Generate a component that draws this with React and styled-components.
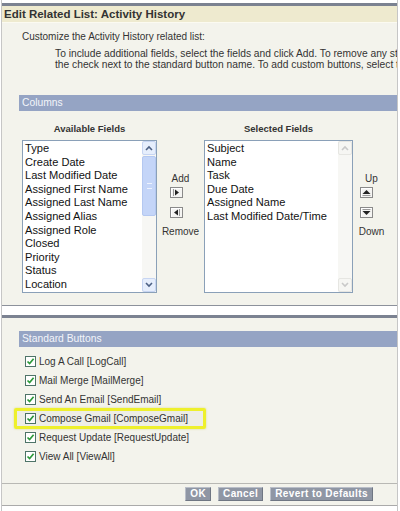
import React from 'react';
import styled, { createGlobalStyle } from 'styled-components';

const availableFields = [
  'Type',
  'Create Date',
  'Last Modified Date',
  'Assigned First Name',
  'Assigned Last Name',
  'Assigned Alias',
  'Assigned Role',
  'Closed',
  'Priority',
  'Status',
  'Location',
];

const selectedFields = [
  'Subject',
  'Name',
  'Task',
  'Due Date',
  'Assigned Name',
  'Last Modified Date/Time',
];

const standardButtons = [
  { label: 'Log A Call [LogCall]' },
  { label: 'Mail Merge [MailMerge]' },
  { label: 'Send An Email [SendEmail]' },
  { label: 'Compose Gmail [ComposeGmail]', highlight: true },
  { label: 'Request Update [RequestUpdate]' },
  { label: 'View All [ViewAll]' },
];

const GlobalStyle = createGlobalStyle`
  html, body {
    margin: 0;
    padding: 0;
    background: #fff;
  }
  body {
    font-family: "Liberation Sans", Arial, sans-serif;
    font-size: 10px;
    color: #222;
  }
`;

const Chevron = ({ dir, color }) => (
  <svg width="8" height="6" viewBox="0 0 8 6">
    <path
      d={dir === 'up' ? 'M1 5 L4 2 L7 5' : 'M1 1 L4 4 L7 1'}
      fill="none"
      stroke={color}
      strokeWidth="1.6"
    />
  </svg>
);

const Arrow = ({ dir }) => {
  const shapes = {
    right: { tri: 'M4 1.5 L8 4.5 L4 7.5 Z', bar: 'M2.5 1 L2.5 8' },
    left: { tri: 'M7 1.5 L3 4.5 L7 7.5 Z', bar: 'M8.5 1 L8.5 8' },
    up: { tri: 'M1.5 6 L5.5 2 L9.5 6 Z', bar: 'M1.5 7.5 L9.5 7.5' },
    down: { tri: 'M1.5 3 L5.5 7 L9.5 3 Z', bar: 'M1.5 1.5 L9.5 1.5' },
  };
  const s = shapes[dir];
  return (
    <svg width="11" height="9" viewBox="0 0 11 9">
      <path d={s.bar} stroke="#9a9a9a" strokeWidth="1" />
      <path d={s.tri} fill="#222" />
    </svg>
  );
};

const Check = () => (
  <svg width="9" height="9" viewBox="0 0 9 9">
    <path d="M1.5 4.5 L3.6 6.6 L7.6 1.8" fill="none" stroke="#2c9a3a" strokeWidth="1.7" />
  </svg>
);

const ScrollBar = ({ disabled }) => (
  <StScroll>
    <StScrollBtn disabled={disabled}>
      <Chevron dir="up" color={disabled ? '#c9c9c9' : '#4d6185'} />
    </StScrollBtn>
    <StTrack>
      {!disabled && (
        <StThumb>
          <span />
        </StThumb>
      )}
    </StTrack>
    <StScrollBtn disabled={disabled}>
      <Chevron dir="down" color={disabled ? '#c9c9c9' : '#4d6185'} />
    </StScrollBtn>
  </StScroll>
);

const FieldList = ({ title, items, width, disabledScroll }) => (
  <StFieldCol width={width}>
    <StColTitle>{title}</StColTitle>
    <StListBox>
      <StItems>
        {items.map(item => (
          <StItem key={item}>{item}</StItem>
        ))}
      </StItems>
      <ScrollBar disabled={disabledScroll} />
    </StListBox>
  </StFieldCol>
);

const Mover = ({ top, bottom, first, second, width, shift }) => (
  <StMover width={width}>
    <StMoverLabel>{top}</StMoverLabel>
    <StArrowBtn shift={shift}>
      <Arrow dir={first} />
    </StArrowBtn>
    <StArrowBtn shift={shift} second>
      <Arrow dir={second} />
    </StArrowBtn>
    <StMoverLabel spaced>{bottom}</StMoverLabel>
  </StMover>
);

const App = () => {
  return (
    <>
      <GlobalStyle />
      <StFrame>
        <StPanel>
          <StHeader>Edit Related List: Activity History</StHeader>
          <StIntro>Customize the Activity History related list:</StIntro>
          <StNote>
            <div>To include additional fields, select the fields and click Add. To remove any standard buttons, uncheck</div>
            <div>the check next to the standard button name. To add custom buttons, select them and click Add.</div>
          </StNote>
          <StSectionBar top={25.5}>Columns</StSectionBar>
          <StColumns>
            <FieldList title="Available Fields" items={availableFields} width={135} />
            <Mover top="Add" bottom="Remove" first="right" second="left" width={47} shift={8} />
            <FieldList title="Selected Fields" items={selectedFields} width={149} disabledScroll />
            <Mover top="Up" bottom="Down" first="up" second="down" width={37} shift={11} />
          </StColumns>
        </StPanel>

        <StPanel second>
          <StSectionBar top={13}>Standard Buttons</StSectionBar>
          <StRows>
            {standardButtons.map(btn => (
              <StRow key={btn.label} highlight={btn.highlight}>
                <StCheckbox>
                  <Check />
                </StCheckbox>
                <StRowLabel>{btn.label}</StRowLabel>
              </StRow>
            ))}
          </StRows>
          <StFooter>
            <StButton>OK</StButton>
            <StButton>Cancel</StButton>
            <StButton>Revert to Defaults</StButton>
          </StFooter>
        </StPanel>
      </StFrame>
    </>
  );
};

const StFrame = styled.div`
  width: 397px;
  height: 511px;
  box-sizing: border-box;
  margin-left: 1px;
  padding-top: 3px;
  border-left: 1px solid #c6c6c6;
  border-right: 1px solid #c6c6c6;
  overflow: hidden;
`;

const StPanel = styled.div`
  background: #f3f3ec;
  border-top: 3px solid #7b8291;
  border-bottom: 1px solid ${props => (props.second ? '#aaaaaa' : '#8c919b')};
  margin-top: ${props => (props.second ? '9px' : '0')};
  padding-bottom: ${props => (props.second ? '0' : '12px')};
  overflow: hidden;
`;

const StHeader = styled.div`
  height: 16px;
  line-height: 16px;
  background: #eeeacf;
  border-bottom: 1px solid #fbfaf1;
  padding-left: 2px;
  font-size: 11.5px;
  font-weight: bold;
  color: #333;
`;

const StIntro = styled.div`
  padding: 8px 0 0 20px;
  line-height: 12px;
  color: #333;
`;

const StNote = styled.div`
  margin: 4.5px 0 0 53px;
  line-height: 11px;
  font-size: 10.25px;
  white-space: nowrap;
  color: #333;
`;

const StSectionBar = styled.div`
  margin: ${props => props.top}px 0 0 17px;
  height: 16px;
  line-height: 16px;
  padding-left: 3px;
  background: #95a4c4;
  color: #f3f5fa;
  font-size: 10.3px;
`;

const StColumns = styled.div`
  display: flex;
  align-items: flex-start;
  padding-left: 20px;
  margin-top: 12px;
`;

const StFieldCol = styled.div`
  width: ${props => props.width}px;
  display: flex;
  flex-direction: column;
`;

const StColTitle = styled.div`
  height: 12px;
  line-height: 12px;
  text-align: center;
  font-weight: bold;
  font-size: 9.5px;
  color: #333;
`;

const StListBox = styled.div`
  margin-top: 5px;
  height: 153px;
  box-sizing: border-box;
  border: 1px solid #8aa0b8;
  background: #fff;
  display: flex;
`;

const StItems = styled.div`
  flex: 1;
  padding: 1px 0 0 2px;
  overflow: hidden;
`;

const StItem = styled.div`
  height: 13.6px;
  line-height: 13.6px;
  font-size: 11.1px;
  color: #111;
  white-space: nowrap;
`;

const StScroll = styled.div`
  width: 14px;
  display: flex;
  flex-direction: column;
  background: #f7f7f4;
`;

const StScrollBtn = styled.div`
  height: 14px;
  box-sizing: border-box;
  display: flex;
  align-items: center;
  justify-content: center;
  border: 1px solid ${props => (props.disabled ? '#e6e6e2' : '#c7d5f2')};
  border-radius: 2px;
  background: ${props => (props.disabled ? '#f6f6f3' : '#e6eefc')};
`;

const StTrack = styled.div`
  flex: 1;
  padding-top: 1px;
`;

const StThumb = styled.div`
  height: 60px;
  box-sizing: border-box;
  border: 1px solid #b4c8f1;
  border-radius: 2px;
  background: #c4d5f8;
  display: flex;
  align-items: center;
  justify-content: center;
  span {
    width: 5px;
    height: 4px;
    border-top: 1px solid #eef3fe;
    border-bottom: 1px solid #eef3fe;
  }
`;

const StMover = styled.div`
  width: ${props => props.width}px;
  padding-top: 50px;
  display: flex;
  flex-direction: column;
  align-items: center;
`;

const StMoverLabel = styled.div`
  height: 12px;
  line-height: 12px;
  color: #333;
  margin-top: ${props => (props.spaced ? '8px' : '0')};
`;

const StArrowBtn = styled.div`
  width: 13px;
  height: 11px;
  box-sizing: border-box;
  margin-top: ${props => (props.second ? '9px' : '2px')};
  margin-right: ${props => props.shift}px;
  border: 1px solid #8a8a8a;
  background: #f4f4f2;
  box-shadow: inset 1px 1px #fff;
  display: flex;
  align-items: center;
  justify-content: center;
`;

const StRows = styled.div`
  margin-top: 4.5px;
`;

const StRow = styled.div`
  position: relative;
  height: 19px;
  display: flex;
  align-items: center;
  padding-left: 23px;

  &::before {
    content: '';
    display: ${props => (props.highlight ? 'block' : 'none')};
    position: absolute;
    left: 12px;
    top: -1px;
    width: 192px;
    height: 21px;
    box-sizing: border-box;
    border: 3px solid #eef02c;
    border-radius: 2px;
    background: rgba(0, 0, 0, 0.025);
    box-shadow: 0 0 2px rgba(200, 200, 40, 0.6);
  }
`;

const StCheckbox = styled.div`
  width: 11px;
  height: 11px;
  box-sizing: border-box;
  border: 1px solid #4e7468;
  background: #fff;
  display: flex;
  align-items: center;
  justify-content: center;
`;

const StRowLabel = styled.span`
  margin-left: 3px;
  color: #333;
  white-space: nowrap;
`;

const StFooter = styled.div`
  margin-top: 17.5px;
  border-top: 1px solid #b8b8b4;
  padding: 3px 24px 4px 0;
  display: flex;
  justify-content: flex-end;
  gap: 7px;
`;

const StButton = styled.div`
  height: 14px;
  line-height: 12px;
  box-sizing: border-box;
  padding: 0 4px;
  background: #8f96a4;
  border: 1px solid;
  border-color: #b9bec8 #6f7683 #6f7683 #b9bec8;
  color: #fff;
  font-weight: bold;
  font-size: 10px;
  letter-spacing: 0.4px;
`;

export default App;
